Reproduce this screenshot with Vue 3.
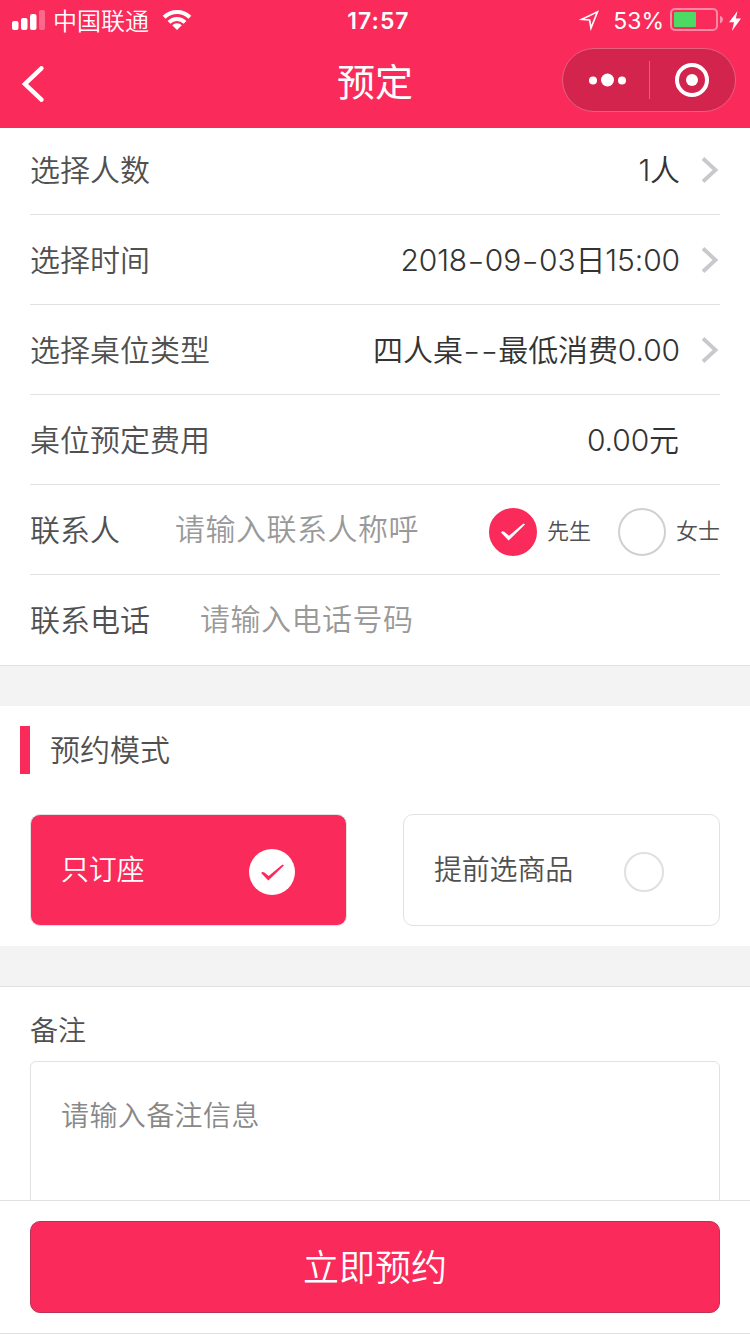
<template>
  <div class="page">
    <header class="header">
      <!-- 状态栏 -->
      <div class="status-bar">
        <div class="status-left">
          <svg class="signal" width="34" height="20" viewBox="0 0 34 20">
            <rect x="0" y="11" width="6.5" height="9" rx="2" fill="#fff" />
            <rect x="9" y="8" width="6.5" height="12" rx="2" fill="#fff" />
            <rect x="18" y="4" width="6.5" height="16" rx="2" fill="#fff" />
            <rect x="27" y="0" width="6" height="20" rx="2" fill="#fff" opacity="0.3" />
          </svg>
          <span class="carrier">中国联通</span>
          <svg class="wifi" width="30" height="22" viewBox="0 0 30 22">
            <g fill="none" stroke="#fff" stroke-width="4">
              <path d="M2.1 8.3 A18.4 18.4 0 0 1 27.9 8.3" />
              <path d="M7 13.3 A11.4 11.4 0 0 1 23 13.3" />
            </g>
            <path d="M15 21 L10.2 16.3 A6.8 6.8 0 0 1 19.8 16.3 Z" fill="#fff" />
          </svg>
        </div>
        <span class="time">17:57</span>
        <div class="status-right">
          <svg class="location" width="20" height="21" viewBox="0 0 20 21">
            <path d="M2.5 9.4 L18.5 1.8 L12 18 L10.6 10 Z" fill="none" stroke="#fff" stroke-width="1.7" stroke-linejoin="miter" />
          </svg>
          <span class="percent">53%</span>
          <svg class="battery" width="54" height="24" viewBox="0 0 54 24">
            <rect x="1" y="1" width="46" height="21" rx="4" fill="none" stroke="#fff" stroke-opacity="0.45" stroke-width="2" />
            <rect x="4" y="4" width="22" height="15" rx="1" fill="#4cd964" />
            <path d="M50 8 Q53 9 53 11.5 Q53 14 50 15.5 Z" fill="#fff" opacity="0.5" />
          </svg>
          <svg class="bolt" width="12" height="20" viewBox="0 0 12 20">
            <path d="M8.5 0 L0 11.2 L5 11.2 L3 20 L12 7.6 L6.8 7.6 Z" fill="#fff" />
          </svg>
        </div>
      </div>

      <!-- 导航栏 -->
      <div class="nav-bar">
        <svg class="back" width="22" height="36" viewBox="0 0 22 36">
          <path d="M19.4 2.3 L3 18 L19.4 33.7" fill="none" stroke="#fff" stroke-width="4.4" stroke-linecap="round" stroke-linejoin="miter" />
        </svg>
        <h1 class="title">预定</h1>
        <div class="capsule">
          <svg width="38" height="14" viewBox="0 0 38 14">
            <circle cx="4" cy="7.5" r="4" fill="#fff" />
            <circle cx="18.5" cy="7" r="6.5" fill="#fff" />
            <circle cx="33" cy="7.5" r="4" fill="#fff" />
          </svg>
          <span class="capsule-line"></span>
          <svg width="34" height="34" viewBox="0 0 34 34">
            <circle cx="17" cy="17" r="15" fill="none" stroke="#fff" stroke-width="4" />
            <circle cx="17" cy="17" r="6" fill="#fff" />
          </svg>
        </div>
      </div>
    </header>

    <main class="content">
      <section class="form">
        <div v-for="item in rows" :key="item.label" class="row">
          <span class="label">{{ item.label }}</span>
          <span class="value"><span v-for="(part, i) in splitDash(item.value)" :key="i" :class="{ dash: part[0] === '-' }">{{ part }}</span></span>
          <svg v-if="item.arrow" class="arrow" width="18" height="28" viewBox="0 0 18 28">
            <path d="M2 2.5 L14.5 14 L2 25.5" fill="none" stroke="#c8c8cd" stroke-width="3.8" />
          </svg>
        </div>

        <div class="row">
          <span class="label">联系人</span>
          <input v-model="contact" class="field contact" type="text" placeholder="请输入联系人称呼" />
          <div class="genders">
            <div v-for="item in genders" :key="item" class="gender" @click="gender = item">
              <span class="radio" :class="{ active: gender === item }">
                <svg v-if="gender === item" width="26" height="20" viewBox="0 0 26 20">
                  <path d="M1 10.5 Q2.5 8.5 4.5 10 L9 13.8 L23.5 1.5 L25 2.5 L8.6 18.5 Z" fill="#fff" />
                </svg>
              </span>
              <span class="gender-text">{{ item }}</span>
            </div>
          </div>
        </div>

        <div class="row last">
          <span class="label">联系电话</span>
          <input v-model="phone" class="field phone" type="text" placeholder="请输入电话号码" />
        </div>
      </section>

      <section class="mode">
        <h2 class="mode-title">预约模式</h2>
        <div class="cards">
          <div
            v-for="(item, index) in modes"
            :key="item"
            class="card"
            :class="{ active: mode === index }"
            @click="mode = index"
          >
            <span class="card-text">{{ item }}</span>
            <span class="check">
              <svg v-if="mode === index" width="25" height="19" viewBox="0 0 26 20">
                <path d="M1 10.5 Q2.5 8.5 4.5 10 L9 13.8 L23.5 1.5 L25 2.5 L8.6 18.5 Z" fill="#fa2a5a" />
              </svg>
            </span>
          </div>
        </div>
      </section>

      <section class="remark">
        <h3 class="remark-title">备注</h3>
        <textarea v-model="remark" class="remark-input" placeholder="请输入备注信息"></textarea>
      </section>
    </main>

    <footer class="footer">
      <button class="submit">立即预约</button>
    </footer>
  </div>
</template>

<script setup>
import { ref } from 'vue'

const rows = [
  { label: '选择人数', value: '1人', arrow: true },
  { label: '选择时间', value: '2018-09-03日15:00', arrow: true },
  { label: '选择桌位类型', value: '四人桌--最低消费0.00', arrow: true },
  { label: '桌位预定费用', value: '0.00元', arrow: false }
]

const genders = ['先生', '女士']
const modes = ['只订座', '提前选商品']

const contact = ref('')
const phone = ref('')
const remark = ref('')
const gender = ref('先生')
const mode = ref(0)

// 把连字符单独拆出来，方便加宽显示
const splitDash = (text) => text.split(/(-+)/).filter((part) => part)
</script>

<style>
body {
  margin: 0;
  background: #fff;
}
</style>

<style scoped>
.page {
  display: flex;
  flex-direction: column;
  width: 750px;
  height: 1334px;
  overflow: hidden;
  background: #fff;
  color: #505050;
  font-family: Inter, "Noto Sans CJK SC", sans-serif;
  font-weight: 350;
  font-size: 30px;
}

.page * {
  box-sizing: border-box;
}

h1,
h2,
h3 {
  margin: 0;
  font-weight: inherit;
}

svg {
  display: block;
  flex: none;
}

.header {
  flex: none;
  height: 128px;
  background: #fa2a5a;
  color: #fff;
}

.status-bar {
  display: grid;
  grid-template-columns: 1fr auto 1fr;
  align-items: center;
  height: 40px;
  padding: 0 9px 0 12px;
}

.status-left,
.status-right {
  display: flex;
  align-items: center;
}

.status-right {
  justify-content: flex-end;
}

.carrier {
  margin-left: 7px;
  padding-bottom: 2px;
  font-size: 24px;
}

.wifi {
  margin-left: 13px;
}

.time {
  padding-top: 2px;
  padding-left: 4px;
  font-size: 23px;
  font-weight: 600;
  letter-spacing: 1px;
}

.percent {
  margin: 1px 6px 0 14px;
  font-size: 23px;
  font-weight: 400;
}

.location {
  margin-top: 1px;
}

.bolt {
  margin-top: 1px;
  margin-left: 5px;
}

.nav-bar {
  display: grid;
  grid-template-columns: 1fr auto 1fr;
  align-items: center;
  height: 80px;
  padding: 0 14px;
}

.back {
  margin-top: 7px;
  margin-left: 8px;
}

.title {
  padding-top: 3px;
  font-size: 38px;
  line-height: 50px;
  font-weight: 400;
}

.capsule {
  display: flex;
  justify-self: end;
  align-items: center;
  justify-content: space-between;
  width: 174px;
  height: 64px;
  padding: 0 26px;
  border: 1px solid #e4617f;
  border-radius: 32px;
  background: #d2244c;
}

.capsule-line {
  width: 1px;
  height: 38px;
  margin-left: -4px;
  background: #e0607f;
}

.content {
  flex: 1;
  min-height: 0;
  overflow: hidden;
}

.form {
  margin-top: -3px;
  padding: 0 30px;
}

.row {
  display: flex;
  align-items: center;
  height: 90px;
  border-bottom: 1px solid #e2e2e2;
}

.row.last {
  border-bottom: none;
}

.label,
.value {
  padding-bottom: 4px;
}

.value {
  margin-left: auto;
  margin-right: 41px;
  color: #333;
  letter-spacing: -0.1px;
}

.dash {
  font-size: 40px;
  font-weight: 250;
  line-height: 0;
  vertical-align: -4px;
}

.arrow {
  margin-left: -20px;
  margin-right: 1px;
}

.field {
  padding: 0 0 2px;
  border: none;
  outline: none;
  background: none;
  color: #333;
  font: inherit;
  letter-spacing: 0.5px;
}

.field::placeholder,
.remark-input::placeholder {
  color: #999;
  opacity: 1;
}

.contact {
  width: 300px;
  margin-left: 55px;
}

.phone {
  width: 400px;
  margin-left: 50px;
}

.genders {
  display: flex;
  gap: 28px;
  margin-left: auto;
}

.gender {
  display: flex;
  align-items: center;
  gap: 10px;
}

.radio {
  display: flex;
  align-items: center;
  justify-content: center;
  width: 48px;
  height: 48px;
  margin-top: 4px;
  border: 2px solid #d0d0d0;
  border-radius: 50%;
}

.radio.active {
  border-color: #fa2a5a;
  background: #fa2a5a;
}

.gender-text {
  margin-right: -1px;
  padding-bottom: 1px;
  font-size: 22px;
}

.genders .gender:last-child .gender-text {
  margin-right: 0;
}

.mode {
  height: 281px;
  padding: 60px 30px 0;
  border-top: 1px solid #e0e0e0;
  box-shadow: inset 0 40px #f3f3f3;
}

.mode-title {
  height: 48px;
  margin-left: -10px;
  padding-left: 20px;
  border-left: 10px solid #fa2a5a;
  font-size: 30px;
  line-height: 48px;
}

.cards {
  display: flex;
  justify-content: space-between;
  margin-top: 40px;
}

.card {
  display: flex;
  align-items: center;
  justify-content: space-between;
  width: 317px;
  height: 112px;
  padding: 0 55px 0 30px;
  border: 1px solid #e2e2e2;
  border-radius: 10px;
  font-size: 28px;
}

.card.active {
  padding-right: 51px;
  background: #fa2a5a;
  color: #fff;
}

.card-text {
  padding-bottom: 4px;
  letter-spacing: -0.2px;
}

.check {
  display: flex;
  align-items: center;
  justify-content: center;
  width: 40px;
  height: 40px;
  margin-top: 4px;
  border: 2px solid #e0e0e0;
  border-radius: 50%;
}

.card.active .check {
  width: 46px;
  height: 46px;
  border: none;
  background: #fff;
}

.remark {
  padding: 64px 30px 0;
  background: linear-gradient(#f3f3f3 40px, #e0e0e0 40px, #e0e0e0 41px, #fff 41px);
}

.remark-title {
  height: 41px;
  font-size: 28px;
  line-height: 42px;
}

.remark-input {
  display: block;
  width: 690px;
  height: 200px;
  margin-top: 10px;
  padding: 32px 30px;
  border: 1px solid #e2e2e2;
  border-radius: 6px;
  outline: none;
  resize: none;
  background: none;
  font: inherit;
  font-size: 28px;
  letter-spacing: 0.4px;
}

.remark-input::placeholder {
  color: #888;
}

.footer {
  flex: none;
  height: 134px;
  padding: 20px 30px 0;
  border-top: 1px solid #e0e0e0;
  border-bottom: 1px solid #e0e0e0;
  background: #fff;
}

.submit {
  display: block;
  width: 690px;
  height: 92px;
  padding: 0 0 4px;
  border: 1px solid #b83556;
  border-radius: 10px;
  background: #fa2a5a;
  color: #fff;
  font: inherit;
  font-size: 36px;
}
</style>
